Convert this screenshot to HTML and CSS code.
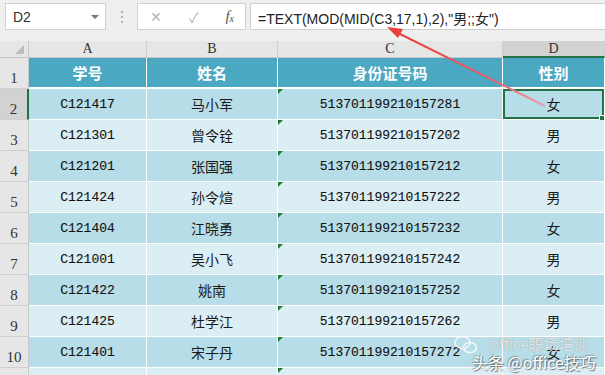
FILE: index.html
```html
<!DOCTYPE html>
<html lang="zh-CN">
<head>
    <meta charset="UTF-8">
    <title>身份证号码判断性别</title>
    <link rel="stylesheet" href="styles.css">
</head>
<body>
    <div class="formula-bar">
        <div class="name-box"><span>D2</span><span class="caret"></span></div>
        <div class="grip"><i></i><i></i><i></i></div>
        <div class="fx-buttons">
            <span class="btn btn-x">✕</span>
            <span class="btn btn-ok">✓</span>
            <span class="btn btn-fx">f<sub>x</sub></span>
        </div>
        <div class="formula">=TEXT(MOD(MID(C3,17,1),2),"男;;女")</div>
    </div>

    <div class="sheet">
        <div class="corner"></div>
        <div class="col-head">A</div>
        <div class="col-head">B</div>
        <div class="col-head">C</div>
        <div class="col-head active">D</div>

        <div class="row-head">1</div>
        <div class="cell title">学号</div>
        <div class="cell title">姓名</div>
        <div class="cell title">身份证号码</div>
        <div class="cell title">性别</div>

        <div class="row-head active">2</div>
        <div class="cell dark mono">C121417</div>
        <div class="cell dark">马小军</div>
        <div class="cell dark mono flag">513701199210157281</div>
        <div class="cell dark selected">女</div>

        <div class="row-head">3</div>
        <div class="cell light mono">C121301</div>
        <div class="cell light">曾令铨</div>
        <div class="cell light mono flag">513701199210157202</div>
        <div class="cell light">男</div>

        <div class="row-head">4</div>
        <div class="cell dark mono">C121201</div>
        <div class="cell dark">张国强</div>
        <div class="cell dark mono flag">513701199210157212</div>
        <div class="cell dark">女</div>

        <div class="row-head">5</div>
        <div class="cell light mono">C121424</div>
        <div class="cell light">孙令煊</div>
        <div class="cell light mono flag">513701199210157222</div>
        <div class="cell light">男</div>

        <div class="row-head">6</div>
        <div class="cell dark mono">C121404</div>
        <div class="cell dark">江晓勇</div>
        <div class="cell dark mono flag">513701199210157232</div>
        <div class="cell dark">女</div>

        <div class="row-head">7</div>
        <div class="cell light mono">C121001</div>
        <div class="cell light">吴小飞</div>
        <div class="cell light mono flag">513701199210157242</div>
        <div class="cell light">男</div>

        <div class="row-head">8</div>
        <div class="cell dark mono">C121422</div>
        <div class="cell dark">姚南</div>
        <div class="cell dark mono flag">513701199210157252</div>
        <div class="cell dark">女</div>

        <div class="row-head">9</div>
        <div class="cell light mono">C121425</div>
        <div class="cell light">杜学江</div>
        <div class="cell light mono flag">513701199210157262</div>
        <div class="cell light">男</div>

        <div class="row-head">10</div>
        <div class="cell dark mono">C121401</div>
        <div class="cell dark">宋子丹</div>
        <div class="cell dark mono flag">513701199210157272</div>
        <div class="cell dark">女</div>

        <div class="row-head"></div>
        <div class="cell light"></div>
        <div class="cell light"></div>
        <div class="cell light flag"></div>
        <div class="cell light"></div>
    </div>

    <!-- red callout arrow from D2 to the formula -->
    <svg class="arrow" width="605" height="375" viewBox="0 0 605 375">
        <defs>
            <linearGradient id="fade" x1="545" y1="106" x2="392" y2="30" gradientUnits="userSpaceOnUse">
                <stop offset="0" stop-color="#e7a0b0"/>
                <stop offset="0.35" stop-color="#e8606a"/>
                <stop offset="1" stop-color="#e8403c"/>
            </linearGradient>
        </defs>
        <line x1="545" y1="106" x2="396" y2="32" stroke="url(#fade)" stroke-width="2.2"/>
        <polygon points="387,27 403,29 398,38" fill="#e8403c"/>
    </svg>

    <div class="watermark">
        <svg class="wm-icon" width="24" height="20" viewBox="0 0 24 20">
            <ellipse cx="8.5" cy="7.5" rx="7.5" ry="6" fill="none" stroke="#fff" stroke-width="1.5"/>
            <ellipse cx="16" cy="12.5" rx="6.5" ry="5" fill="none" stroke="#fff" stroke-width="1.5"/>
        </svg>
        <div class="wm-text">
            <div class="wm-top">office职场培训</div>
            <div class="wm-bottom">头条 @office技巧</div>
        </div>
    </div>
</body>
</html>
```

FILE: styles.css
```css
body {
    margin: 0;
    width: 605px;
    height: 375px;
    overflow: hidden;
    position: relative;
    background: #fff;
    font-family: "Liberation Sans", "Noto Sans CJK SC", sans-serif;
    color: #222;
}
.formula-bar {
    display: flex;
    align-items: center;
    height: 41px;
    padding: 3px 0 11px 5px;
    box-sizing: border-box;
    background: #efefef;
}
.name-box {
    display: flex;
    align-items: center;
    justify-content: space-between;
    width: 101px;
    height: 27px;
    box-sizing: border-box;
    padding: 0 6px 0 7px;
    background: #fff;
    border: 1px solid #d0d0d0;
    font-size: 14px;
    color: #333;
}
.caret {
    width: 0;
    height: 0;
    border-left: 4px solid transparent;
    border-right: 4px solid transparent;
    border-top: 4px solid #777;
}
.grip {
    display: flex;
    flex-direction: column;
    gap: 3px;
    width: 31px;
    align-items: center;
}
.grip i {
    width: 2px;
    height: 2px;
    background: #b0b0b0;
}
.fx-buttons {
    display: flex;
    align-items: center;
    justify-content: space-between;
    width: 109px;
    height: 27px;
    box-sizing: border-box;
    padding: 0 11px 0 12px;
    background: #fff;
    border: 1px solid #d0d0d0;
}
.btn {
    color: #b4b4b4;
    font-size: 14px;
}
.btn-fx {
    font-family: "Liberation Serif", serif;
    font-style: italic;
    color: #555;
    font-size: 15px;
}
.btn-fx sub {
    font-size: 10px;
    vertical-align: -1px;
}
.formula {
    flex: 1;
    height: 27px;
    margin-left: 4px;
    box-sizing: border-box;
    padding: 4px 0 0 7px;
    background: #fff;
    border: 1px solid #d0d0d0;
    border-right: none;
    font-size: 14px;
    color: #222;
    white-space: nowrap;
}

.sheet {
    display: grid;
    grid-template-columns: 29px 118px 131px 225px 102px;
    grid-template-rows: 17px;
    grid-auto-rows: 31px;
}
.corner {
    position: relative;
    background: #e6e6e6;
    border-right: 1px solid #c8c8c8;
    border-bottom: 1px solid #c8c8c8;
}
.corner::after {
    content: "";
    position: absolute;
    right: 4px;
    bottom: 3px;
    border-left: 9px solid transparent;
    border-bottom: 9px solid #bdbdbd;
}
.col-head {
    display: flex;
    align-items: center;
    justify-content: center;
    background: #e6e6e6;
    border-right: 1px solid #cfcfcf;
    border-bottom: 1px solid #c8c8c8;
    font-family: "Liberation Serif", serif;
    font-size: 14px;
    color: #333;
}
.col-head.active {
    background: #d2d2d2;
    border-bottom: 2px solid #217346;
}
.row-head {
    display: flex;
    align-items: flex-end;
    justify-content: center;
    padding-bottom: 1px;
    background: #e6e6e6;
    border-right: 1px solid #c8c8c8;
    border-bottom: 1px solid #cfcfcf;
    font-family: "Liberation Serif", serif;
    font-size: 15px;
    color: #333;
}
.row-head.active {
    background: #d2d2d2;
    border-right: 2px solid #217346;
}
.cell {
    position: relative;
    display: flex;
    align-items: center;
    justify-content: center;
    border-right: 1px solid #fff;
    border-bottom: 1px solid #fff;
    font-family: "Noto Sans CJK SC", sans-serif;
    font-size: 14px;
    color: #1a1a1a;
}
.title {
    background: #4aa8c2;
    color: #fff;
    font-weight: bold;
    font-size: 15px;
    border-bottom-width: 2px;
}
.dark {
    background: #b7dde8;
}
.light {
    background: #dbeef4;
}
.mono {
    font-family: "Liberation Mono", monospace;
    font-size: 13px;
    color: #111;
    -webkit-text-stroke: 0.1px #111;
}
.flag::before {
    content: "";
    position: absolute;
    left: 0;
    top: 0;
    border-top: 5px solid #1f7a30;
    border-right: 5px solid transparent;
}
.selected {
    box-shadow: inset 0 0 0 2px #217346;
}
.selected::after {
    content: "";
    position: absolute;
    right: -1px;
    bottom: -3px;
    width: 4px;
    height: 5px;
    background: #217346;
    border: 1px solid #fff;
}

.arrow {
    position: absolute;
    left: 0;
    top: 0;
    pointer-events: none;
}
.watermark {
    position: absolute;
    left: 454px;
    top: 335px;
    width: 150px;
    display: flex;
    color: #fff;
    font-family: "Noto Sans CJK SC", sans-serif;
    white-space: nowrap;
}
.wm-icon {
    flex: none;
    opacity: 0.85;
}
.wm-text {
    display: flex;
    flex-direction: column;
    line-height: 18px;
}
.wm-top {
    padding-left: 12px;
    font-size: 15px;
    color: rgba(255, 255, 255, 0.75);
    text-shadow: 0 0 1px rgba(90, 90, 90, 0.6);
}
.wm-bottom {
    margin-left: -6px;
    font-size: 16px;
    text-shadow: 1px 1px 1px rgba(60, 60, 60, 0.7), -1px -1px 1px rgba(60, 60, 60, 0.4);
}
```
